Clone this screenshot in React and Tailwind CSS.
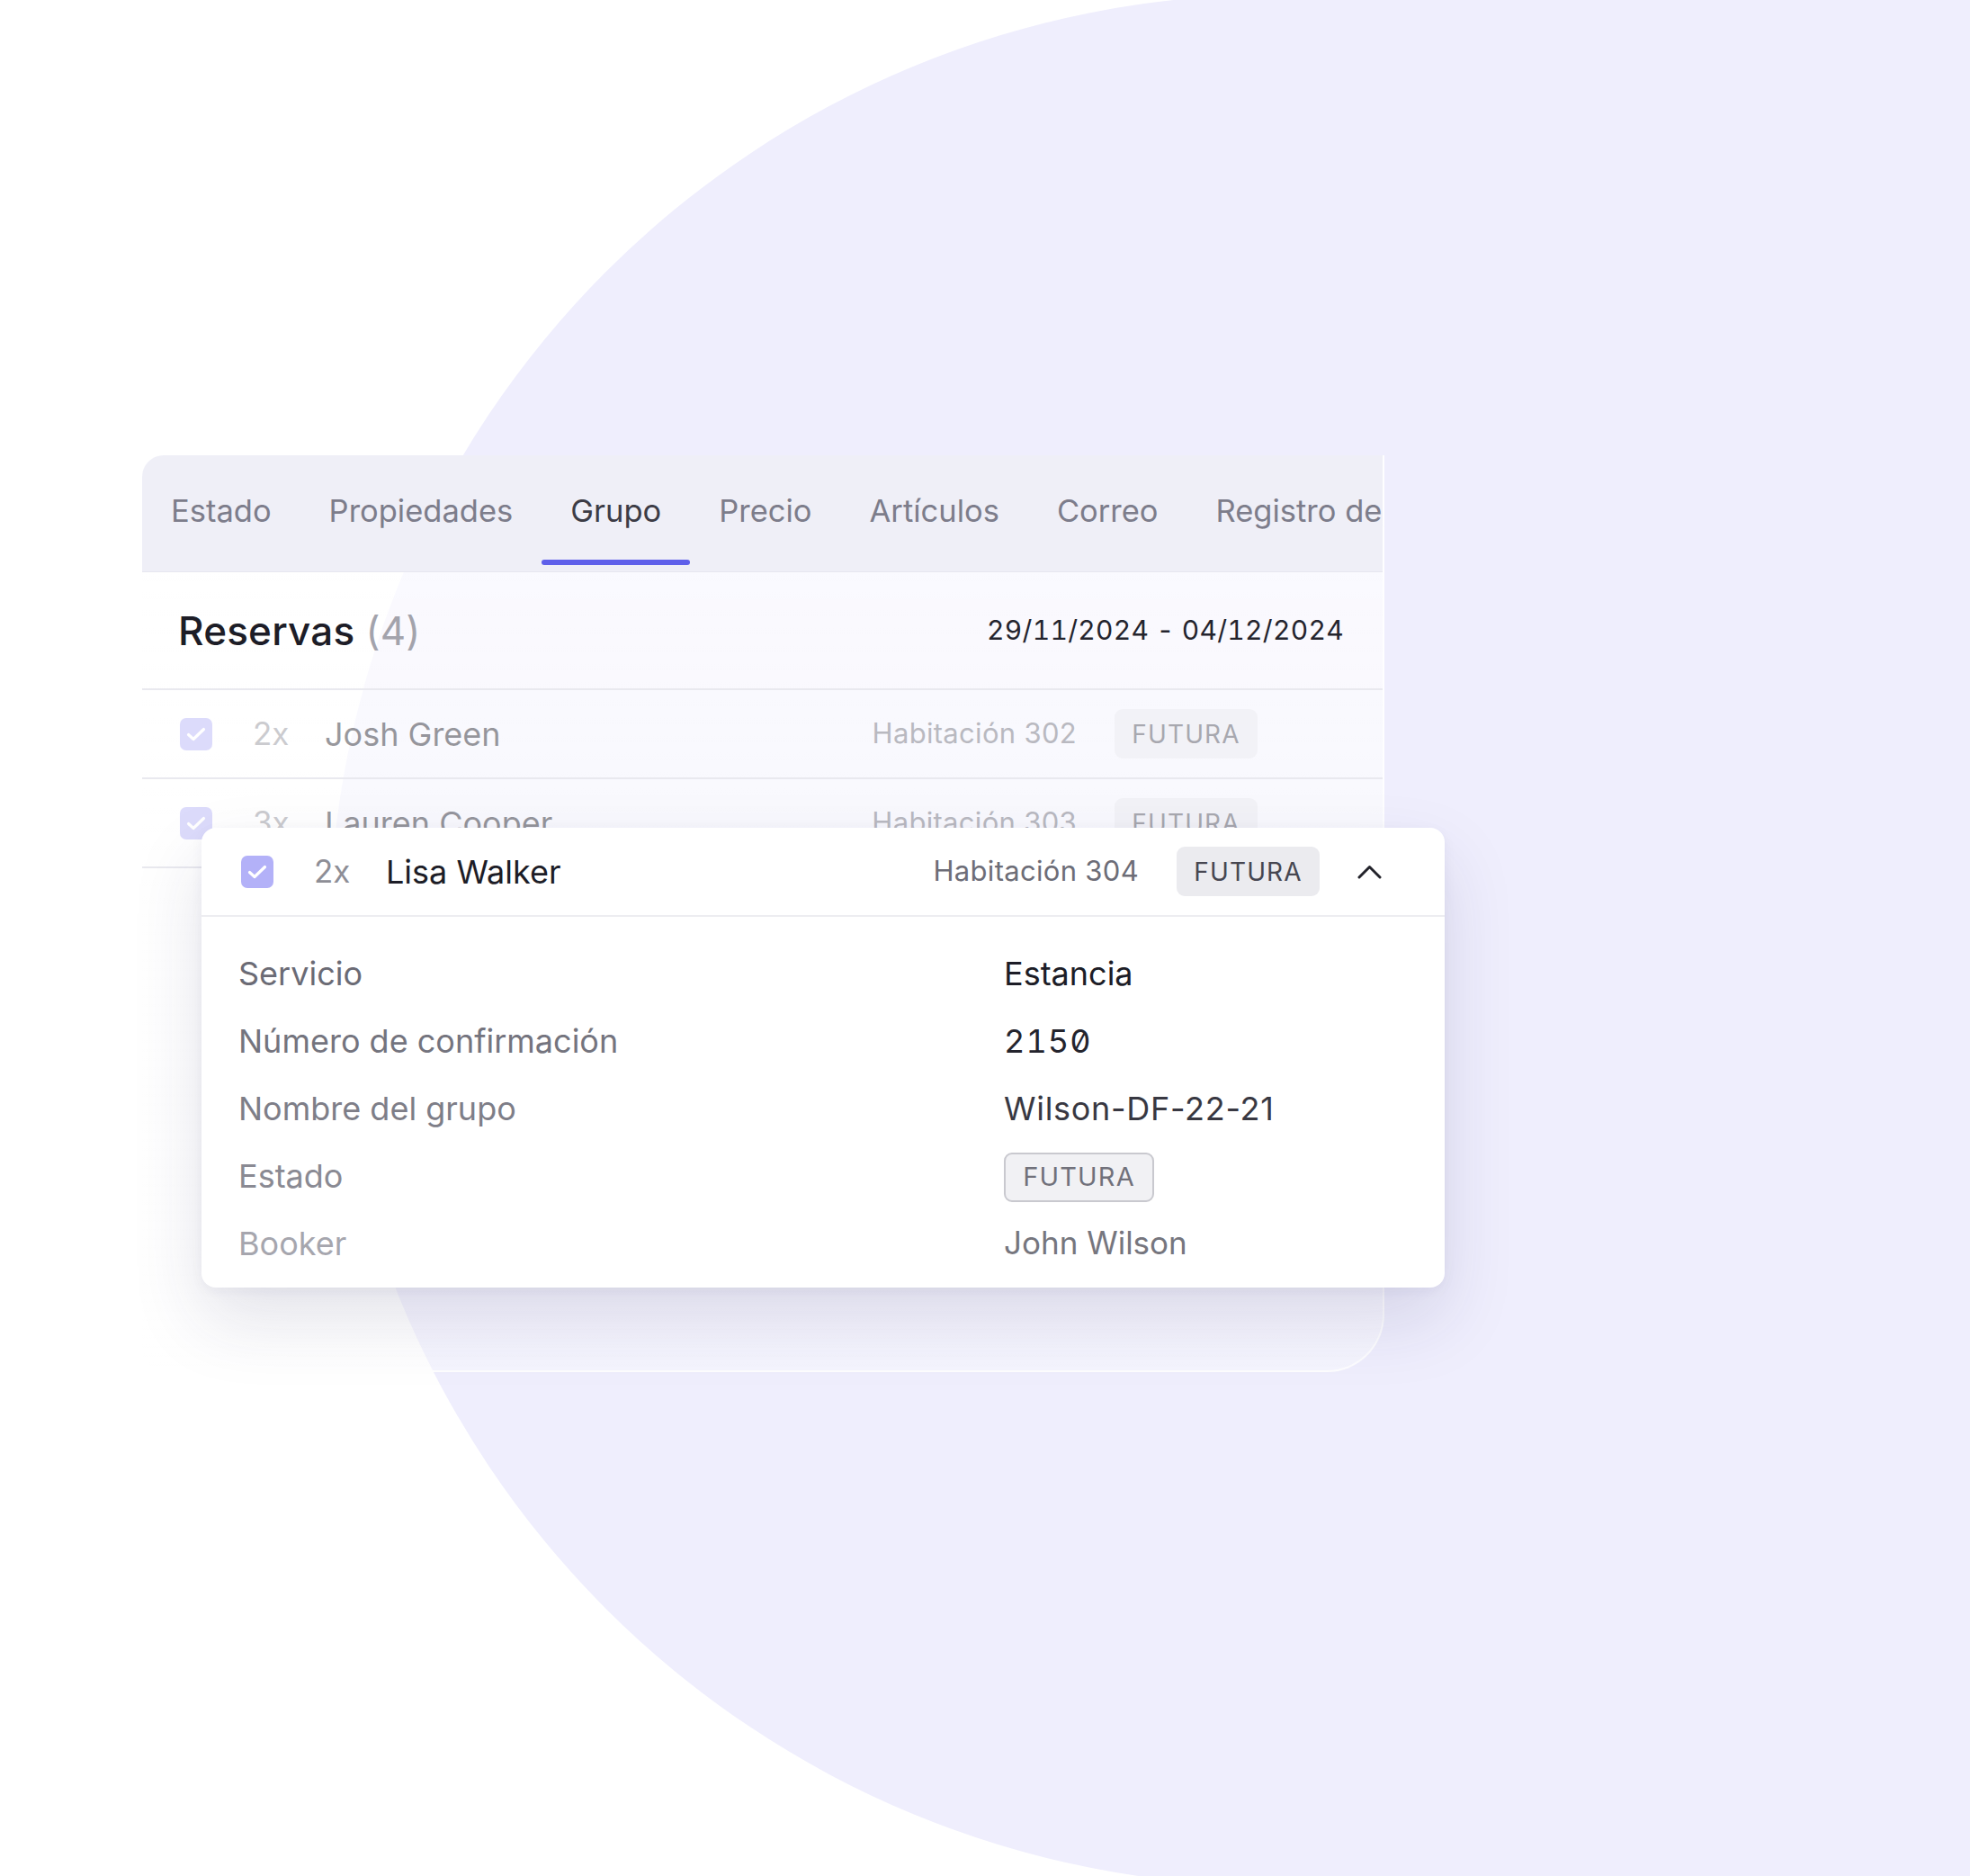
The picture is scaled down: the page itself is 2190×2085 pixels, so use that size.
import React from "react";

const tabs = ["Estado", "Propiedades", "Grupo", "Precio", "Artículos", "Correo", "Registro de"];

function Check() {
  return (
    <svg width="22" height="16" viewBox="0 0 22 16" fill="none">
      <path d="M2.5 8.5 L8 13.5 L19.5 2.5" stroke="white" strokeWidth="3.2" strokeLinecap="round" strokeLinejoin="round" />
    </svg>
  );
}

function ChevronUp({ className }) {
  return (
    <svg className={className} width="27" height="16" viewBox="0 0 27 16" fill="none">
      <path d="M2 14 L13.5 2.5 L25 14" stroke="currentColor" strokeWidth="3" strokeLinecap="round" strokeLinejoin="round" />
    </svg>
  );
}

function RowHeader({ qty, name, room, front }) {
  return (
    <div className="flex items-center h-full">
      <div className="w-[36px] h-[36px] rounded-[7px] flex items-center justify-center bg-[#B3B1F8]">
        <Check />
      </div>
      <span className="ml-[45px] w-[80px] text-[35px] text-[#8E8E96]">{qty}</span>
      <span className="text-[36px] text-[#1D1D27]">{name}</span>
      <span className="ml-auto text-[31px] text-[#6D6D77] tracking-[0.01em]">{room}</span>
      <span className="ml-[42px] w-[159px] h-[55px] rounded-[9px] bg-[#EBEBEF] flex items-center justify-center text-[28px] tracking-[0.04em] text-[#474751]">
        FUTURA
      </span>
      <ChevronUp className={`ml-[42px] text-[#23232B] ${front ? "" : "invisible"}`} />
    </div>
  );
}

export default function App() {
  return (
    <div className="relative w-[2190px] h-[2085px] overflow-hidden bg-white font-[Inter,sans-serif]">
      <div className="absolute left-[366px] top-[-6px] w-[2300px] h-[2102px] rounded-l-[1051px] bg-[#EFEEFD]" />

      <div className="relative pt-[506px] pl-[158px]">
        <div className="relative w-[1381px] h-[1019px] rounded-tl-[24px] rounded-bl-[24px] rounded-br-[64px] bg-gradient-to-b from-white/70 via-white/60 to-white/40 border-r-2 border-b-2 border-white/80 flex flex-col">
          <div className="h-[130px] shrink-0 flex items-stretch overflow-hidden rounded-tl-[24px] bg-[#EDEDF6]/90 border-b border-[#E6E6EF]">
            {tabs.map((t) => (
              <div key={t} className="relative px-[32px] pb-[6px] flex items-center shrink-0">
                <span className={`text-[34.5px] whitespace-nowrap ${t === "Grupo" ? "text-[#3C3C46]" : "text-[#7D7D8B]"}`}>{t}</span>
                {t === "Grupo" && (
                  <div className="absolute left-0 right-0 bottom-[7px] h-[6px] rounded-full bg-[#5F60EA]" />
                )}
              </div>
            ))}
          </div>

          <div className="h-[131px] shrink-0 flex items-center justify-between pl-[40px] pr-[43px] border-b-2 border-[#E9E9EF]">
            <div className="text-[44px] font-medium text-[#1D1D27] tracking-[0.005em]">
              Reservas <span className="font-normal text-[#A3A3AC]">(4)</span>
            </div>
            <div className="text-[30px] text-[#24242D] tracking-[0.01em] tabular-nums">29/11/2024 - 04/12/2024</div>
          </div>

          <div className="h-[99px] shrink-0 pl-[42px] pr-[70px] border-b-2 border-[#E9E9EF]">
            <div className="h-full opacity-45">
              <RowHeader qty="2x" name="Josh Green" room="Habitación 302" />
            </div>
          </div>
          <div className="h-[99px] shrink-0 pl-[42px] pr-[70px] border-b-2 border-[#E9E9EF]">
            <div className="h-full opacity-45">
              <RowHeader qty="3x" name="Lauren Cooper" room="Habitación 303" />
            </div>
          </div>

          <div className="absolute left-[66px] top-[414px] w-[1382px] h-[511px] rounded-[16px] bg-white shadow-[0_36px_80px_rgba(40,40,90,0.13),0_4px_14px_rgba(40,40,90,0.05)] flex flex-col">
            <div className="h-[99px] shrink-0 pl-[44px] pr-[70px] border-b-2 border-[#EDEDF1]">
              <RowHeader qty="2x" name="Lisa Walker" room="Habitación 304" front />
            </div>
            <div className="grid grid-cols-[851px_1fr] pl-[41px] pt-[25px] text-[36px]">
              <div className="h-[75px] flex items-center text-[#6B6B75]">Servicio</div>
              <div className="h-[75px] flex items-center text-[#1D1D27]">Estancia</div>

              <div className="h-[75px] flex items-center text-[#74747E]">Número de confirmación</div>
              <div className="h-[75px] flex items-center text-[#24242D] tabular-nums slashed-zero tracking-[0.03em]">2150</div>

              <div className="h-[75px] flex items-center text-[#7E7E88]">Nombre del grupo</div>
              <div className="h-[75px] flex items-center text-[#383842] tracking-[0.02em]">Wilson-DF-22-21</div>

              <div className="h-[75px] flex items-center text-[#8A8A93]">Estado</div>
              <div className="h-[75px] flex items-center">
                <span className="mt-[3px] w-[167px] h-[55px] rounded-[9px] border-2 border-[#C9C9CF] bg-[#F1F1F4] flex items-center justify-center text-[29px] tracking-[0.04em] text-[#71717B]">
                  FUTURA
                </span>
              </div>

              <div className="h-[75px] flex items-center text-[#A6A6AE]">Booker</div>
              <div className="h-[75px] flex items-center text-[35px] text-[#76767E]">John Wilson</div>
            </div>
          </div>
        </div>
      </div>
    </div>
  );
}
